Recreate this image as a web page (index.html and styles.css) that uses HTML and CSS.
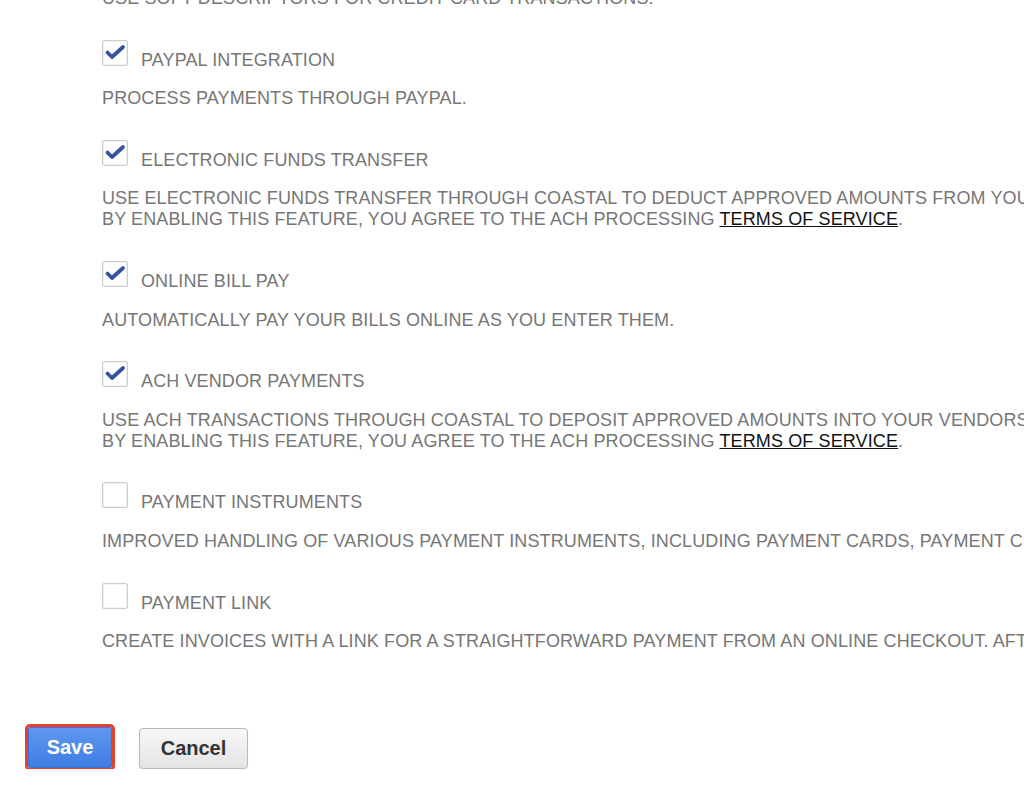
FILE: index.html
```html
<!DOCTYPE html>
<html lang="en">
<head>
<meta charset="utf-8">
<title>Payment settings</title>
<link rel="stylesheet" href="styles.css">
</head>
<body>
<div class="page">
  <div class="settings">
    <p class="desc">USE SOFT DESCRIPTORS FOR CREDIT CARD TRANSACTIONS.</p>

    <div class="item">
      <div class="item-head">
        <span class="check is-on"><svg viewBox="0 0 26 26" width="26" height="26"><path d="M5.5 12.5 L10 17 L21 7" /></svg></span>
        <span class="label">PAYPAL INTEGRATION</span>
      </div>
      <p class="desc">PROCESS PAYMENTS THROUGH PAYPAL.</p>
    </div>

    <div class="item">
      <div class="item-head">
        <span class="check is-on"><svg viewBox="0 0 26 26" width="26" height="26"><path d="M5.5 12.5 L10 17 L21 7" /></svg></span>
        <span class="label">ELECTRONIC FUNDS TRANSFER</span>
      </div>
      <p class="desc">USE ELECTRONIC FUNDS TRANSFER THROUGH COASTAL TO DEDUCT APPROVED AMOUNTS FROM YOUR CUSTOMERS' BANK ACCOUNTS.<br>BY ENABLING THIS FEATURE, YOU AGREE TO THE ACH PROCESSING <a class="tos" href="#">TERMS OF SERVICE</a>.</p>
    </div>

    <div class="item">
      <div class="item-head">
        <span class="check is-on"><svg viewBox="0 0 26 26" width="26" height="26"><path d="M5.5 12.5 L10 17 L21 7" /></svg></span>
        <span class="label">ONLINE BILL PAY</span>
      </div>
      <p class="desc">AUTOMATICALLY PAY YOUR BILLS ONLINE AS YOU ENTER THEM.</p>
    </div>

    <div class="item">
      <div class="item-head">
        <span class="check is-on"><svg viewBox="0 0 26 26" width="26" height="26"><path d="M5.5 12.5 L10 17 L21 7" /></svg></span>
        <span class="label">ACH VENDOR PAYMENTS</span>
      </div>
      <p class="desc">USE ACH TRANSACTIONS THROUGH COASTAL TO DEPOSIT APPROVED AMOUNTS INTO YOUR VENDORS' BANK ACCOUNTS.<br>BY ENABLING THIS FEATURE, YOU AGREE TO THE ACH PROCESSING <a class="tos" href="#">TERMS OF SERVICE</a>.</p>
    </div>

    <div class="item">
      <div class="item-head">
        <span class="check"></span>
        <span class="label">PAYMENT INSTRUMENTS</span>
      </div>
      <p class="desc">IMPROVED HANDLING OF VARIOUS PAYMENT INSTRUMENTS, INCLUDING PAYMENT CARDS, PAYMENT CHECKS AND BANK ACCOUNTS.</p>
    </div>

    <div class="item">
      <div class="item-head">
        <span class="check"></span>
        <span class="label">PAYMENT LINK</span>
      </div>
      <p class="desc">CREATE INVOICES WITH A LINK FOR A STRAIGHTFORWARD PAYMENT FROM AN ONLINE CHECKOUT. AFTER PAYMENT, THE INVOICE IS MARKED PAID.</p>
    </div>
  </div>

  <div class="actions">
    <button class="btn btn-save" type="button">Save</button>
    <button class="btn btn-cancel" type="button">Cancel</button>
  </div>
</div>
</body>
</html>
```

FILE: styles.css
```css
html, body {
  margin: 0;
  padding: 0;
  overflow: hidden;
  background: #ffffff;
}

body {
  font-family: "Liberation Sans", Arial, sans-serif;
  font-size: 18px;
  line-height: 21px;
  color: #767676;
}

.page {
  margin-top: -12px;
}

.settings {
  padding-left: 102px;
  white-space: nowrap;
  letter-spacing: 0.12px;
}

.desc {
  margin: 0;
}

.item {
  margin-top: 30.6px;
}

.item-head {
  display: flex;
  align-items: baseline;
}

.item .desc {
  margin-top: 17.6px;
}

.check {
  flex: none;
  width: 26px;
  height: 26px;
  box-sizing: border-box;
  margin-right: 13px;
  border: 1px solid #cdcdcd;
  border-radius: 2px;
  background: #ffffff;
  box-shadow: inset 0 0 0 1px #f2f2f2;
  position: relative;
}

.check svg {
  position: absolute;
  left: -1px;
  top: -1px;
}

.check svg path {
  fill: none;
  stroke: #3553a0;
  stroke-width: 3.8;
  stroke-linecap: round;
  stroke-linejoin: round;
}

.label {
  color: #767676;
}

.tos {
  color: #111111;
  text-decoration: underline;
}

.actions {
  display: flex;
  align-items: flex-start;
  gap: 27px;
  margin-top: 75px;
  padding-left: 28px;
}

.btn {
  font-family: "Liberation Sans", Arial, sans-serif;
  font-size: 20px;
  font-weight: bold;
  height: 41px;
  padding: 0;
  box-sizing: border-box;
  cursor: pointer;
}

.btn-save {
  width: 84px;
  color: #ffffff;
  border: 1px solid #3a74d6;
  border-radius: 2px;
  background: linear-gradient(#5f98f0, #3f7de5);
  outline: 3px solid #e5402b;
  outline-offset: 0;
}

.btn-cancel {
  width: 109px;
  margin-top: 1px;
  color: #333333;
  border: 1px solid #b9b9b9;
  border-radius: 4px;
  background: linear-gradient(#f7f7f7, #e4e4e4);
  box-shadow: 0 1px 1px rgba(0, 0, 0, 0.12);
}
```
